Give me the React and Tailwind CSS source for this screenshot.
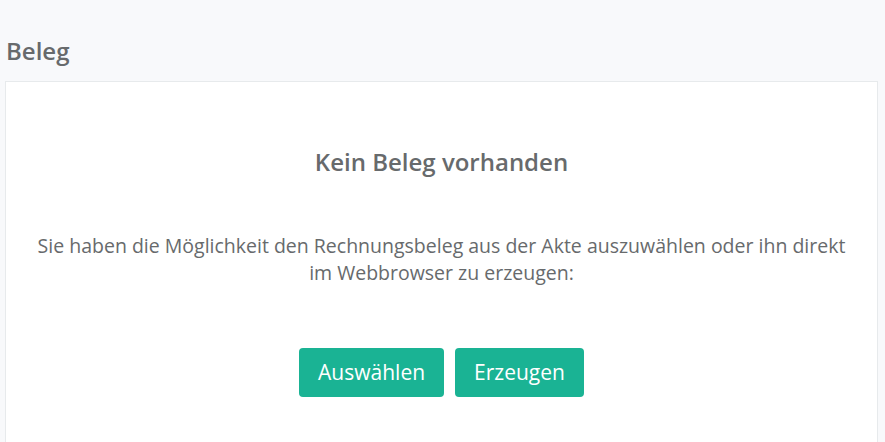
export default function App() {
  return (
    <div className="w-[885px] h-[442px] overflow-hidden bg-[#f8f9fb] text-[#676a6c]" style={{ fontFamily: '"Open Sans", sans-serif' }}>
      <div className="pl-[5px] pr-[7px] pt-[34px]">
        <h2 className="text-[24px] font-semibold leading-[34px] mb-[13px] pl-[1px] text-[#676a6c]">Beleg</h2>
        <div className="bg-white border border-[#e7eaec] border-b-0 h-[400px] px-[28px] pt-[60px] text-center">
          <h3 className="text-[24px] font-semibold leading-[40px] text-[#676a6c]">Kein Beleg vorhanden</h3>
          <p className="text-[19.5px] leading-[27px] mt-[50px]">
            Sie haben die Möglichkeit den Rechnungsbeleg aus der Akte auszuwählen oder ihn direkt im Webbrowser zu erzeugen:
          </p>
          <div className="flex justify-center gap-[11px] mt-[62px]">
            <button className="bg-[#1ab394] text-white text-[21px] rounded-[4px] h-[49px] px-[19px]">Auswählen</button>
            <button className="bg-[#1ab394] text-white text-[21px] rounded-[4px] h-[49px] px-[19px]">Erzeugen</button>
          </div>
        </div>
      </div>
    </div>
  );
}
